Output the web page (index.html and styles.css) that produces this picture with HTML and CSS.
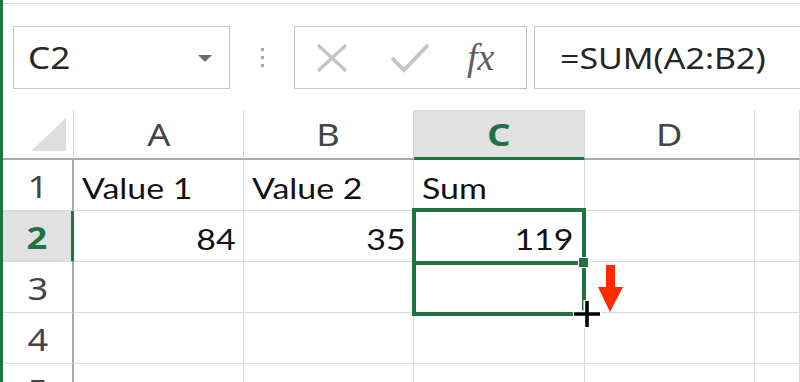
FILE: index.html
```html
<!DOCTYPE html>
<html>
<head>
<meta charset="utf-8">
<link rel="stylesheet" href="styles.css">
</head>
<body>
<div class="app">
  <div class="edge"></div>
  <div class="main">
    <div class="ribbon-line"></div>
    <div class="fbar">
      <div class="namebox">
        <span class="t tl">C2</span>
        <svg class="dd" width="14" height="7" viewBox="0 0 14 7"><polygon points="0,0 14,0 7,7" fill="#6e6e6e"/></svg>
      </div>
      <div class="grip"><i></i><i></i><i></i></div>
      <div class="btns">
        <svg class="ico-x" width="32" height="28" viewBox="0 0 32 28"><path d="M2 1 L30 27 M30 1 L2 27" stroke="#c4c4c4" stroke-width="3.4" fill="none"/></svg>
        <svg class="ico-ok" width="38" height="30" viewBox="0 0 38 30"><path d="M1 15 L13 27 L37 2" stroke="#c4c4c4" stroke-width="3.8" fill="none"/></svg>
        <span class="fx">fx</span>
      </div>
      <div class="formula"><span class="t tl">=SUM(A2:B2)</span></div>
    </div>
    <div class="sheet">
      <div class="corner"><svg width="35" height="33" viewBox="0 0 35 33"><polygon points="35,0 35,33 0,33" fill="#dedede"/></svg></div>
      <div class="ch"><span class="t tc">A</span></div>
      <div class="ch"><span class="t tc">B</span></div>
      <div class="ch ch-sel"><span class="t tc">C</span></div>
      <div class="ch"><span class="t tc">D</span></div>
      <div class="ch"></div>

      <div class="rh"><span class="t tc">1</span></div>
      <div class="c"><span class="t tl">Value 1</span></div>
      <div class="c"><span class="t tl">Value 2</span></div>
      <div class="c"><span class="t tl">Sum</span></div>
      <div class="c"></div>
      <div class="c"></div>

      <div class="rh rh-sel"><span class="t tc">2</span></div>
      <div class="c num"><span class="t tr">84</span></div>
      <div class="c num"><span class="t tr">35</span></div>
      <div class="c num num-sel"><span class="t tr">119</span></div>
      <div class="c"></div>
      <div class="c"></div>

      <div class="rh"><span class="t tc">3</span></div>
      <div class="c"></div><div class="c"></div><div class="c"></div><div class="c"></div><div class="c"></div>

      <div class="rh"><span class="t tc">4</span></div>
      <div class="c"></div><div class="c"></div><div class="c"></div><div class="c"></div><div class="c"></div>

      <div class="rh"><span class="t tc">5</span></div>
      <div class="c"></div><div class="c"></div><div class="c"></div><div class="c"></div><div class="c"></div>

      <div class="sel"></div>
      <div class="sel-mid"></div>
      <div class="handle"></div>
      <svg class="cursor" width="32" height="32" viewBox="0 0 32 32">
        <path d="M2 16 H30 M16 2 V30" stroke="#ffffff" stroke-width="7" fill="none"/>
        <path d="M3 16 H29 M16 3 V29" stroke="#000000" stroke-width="3.6" fill="none"/>
      </svg>
      <svg class="arrow" width="27" height="48" viewBox="0 0 27 48"><polygon points="9,0 18,0 18,22 26,22 13,47 1,22 9,22" fill="#ff2a00"/></svg>
    </div>
  </div>
</div>
</body>
</html>
```

FILE: styles.css
```css
* { box-sizing: border-box; }
html, body { margin: 0; padding: 0; background: #ffffff; overflow: hidden; }
body { width: 800px; height: 382px; }

.app { display: flex; height: 382px; overflow: hidden; }
.edge { width: 3px; flex: none; background: #217346; }
.main { flex: 1; min-width: 0; overflow: hidden; }

.ribbon-line { height: 4px; border-bottom: 1px solid #d6d6d6; }

.t { display: inline-block; transform: scaleX(1.17); white-space: nowrap; }
.tl { transform-origin: left center; }
.tr { transform-origin: right center; }
.tc { transform-origin: center center; }

.fbar {
  display: flex;
  align-items: stretch;
  height: 63px;
  margin-top: 22px;
  margin-left: 10px;
}
.namebox {
  width: 217px;
  border: 1px solid #c6c6c6;
  display: flex;
  align-items: center;
  justify-content: space-between;
  padding: 0 17px 0 14px;
  font-family: "Noto Sans", "Open Sans", sans-serif;
  font-size: 30px;
  color: #262626;
}
.dd { margin-top: 2px; }
.grip {
  width: 3px;
  margin: 0 30px 0 31px;
  display: flex;
  flex-direction: column;
  justify-content: center;
  gap: 5px;
}
.grip i { display: block; width: 3px; height: 3px; background: #a6a6a6; }
.btns {
  width: 233px;
  border: 1px solid #c6c6c6;
  display: flex;
  align-items: center;
  padding-left: 21px;
}
.ico-x { margin-top: 1px; }
.ico-ok { margin-left: 43px; margin-top: 1px; }
.fx {
  margin-left: 38px;
  font-family: "Liberation Serif", serif;
  font-style: italic;
  font-size: 38px;
  color: #5e5e5e;
  margin-top: -2px;
}
.formula {
  flex: 1;
  margin-left: 7px;
  border: 1px solid #c6c6c6;
  border-right: none;
  display: flex;
  align-items: center;
  padding-left: 25px;
  font-family: "Noto Sans", "Open Sans", sans-serif;
  font-size: 29px;
  color: #262626;
}

.sheet {
  position: relative;
  margin-top: 21px;
  display: grid;
  grid-template-columns: 71px 170px 170px 171px 170px 1fr;
  grid-template-rows: 50px repeat(5, 51px);
}
.sheet > div { display: flex; align-items: flex-end; padding-bottom: 8px; }

.corner {
  border-right: 1px solid #dadada;
  border-bottom: 2px solid #a9a9a9;
  justify-content: flex-end;
  padding: 0 7px 0 0 !important;
  align-items: center !important;
}
.corner svg { margin-top: 1px; }

.ch {
  justify-content: center;
  border-right: 1px solid #dadada;
  border-bottom: 2px solid #a9a9a9;
  font-family: "Noto Sans", "Open Sans", sans-serif;
  font-size: 31px;
  line-height: 31px;
  color: #444444;
}
.ch-sel {
  background: #e1e1e1;
  border-bottom: 3px solid #217346;
  color: #217346;
  font-weight: 700;
  padding-bottom: 7px !important;
}

.rh {
  justify-content: center;
  border-right: 2px solid #a9a9a9;
  border-bottom: 1px solid #dadada;
  font-family: "Noto Sans", "Open Sans", sans-serif;
  font-size: 31px;
  line-height: 31px;
  color: #444444;
}
.rh-sel {
  background: #e1e1e1;
  border-right: 3px solid #217346;
  color: #217346;
  font-weight: 700;
}

.c {
  border-right: 1px solid #dadada;
  border-bottom: 1px solid #dadada;
  padding-left: 8px;
  font-family: Lato, "Liberation Sans", sans-serif;
  font-size: 29px;
  line-height: 29px;
  color: #111111;
}
.num { justify-content: flex-end; padding-right: 7px; }
.num-sel { padding-right: 11px; }

.sel {
  position: absolute;
  left: 409px;
  top: 98px;
  width: 174px;
  height: 108px;
  border: 4px solid #217346;
  padding: 0 !important;
}
.sel-mid {
  position: absolute;
  left: 409px;
  top: 151px;
  width: 168px;
  height: 4px;
  background: #217346;
  padding: 0 !important;
}
.handle {
  position: absolute;
  left: 575px;
  top: 147px;
  width: 11px;
  height: 11px;
  background: #217346;
  border: 1px solid #ffffff;
  padding: 0 !important;
}
.cursor { position: absolute; left: 568px; top: 188px; }
.arrow { position: absolute; left: 594px; top: 155px; }
```
